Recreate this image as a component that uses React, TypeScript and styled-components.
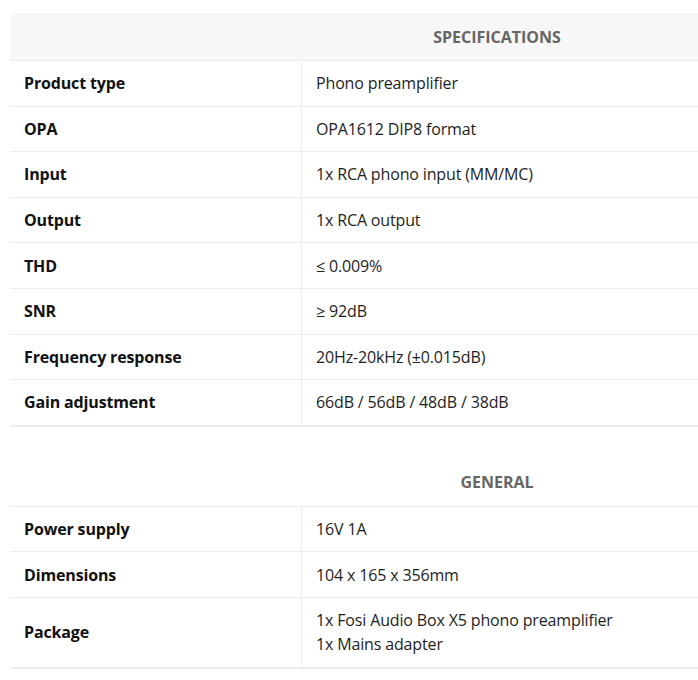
import React from "react";
import styled, { createGlobalStyle } from "styled-components";

const Global = createGlobalStyle`
  html, body { margin: 0; padding: 0; background: #ffffff; }
  body { font-family: "Open Sans", "Noto Sans", sans-serif; overflow: hidden; }
`;

const Page = styled.div`
  padding: 13px 0 0 10px;
  display: flex;
  flex-direction: column;
  gap: 32px;
`;

const Table = styled.div`
  display: grid;
  grid-template-columns: 292px 1fr;
  border-bottom: 1px solid #ececec;
  width: 700px;
`;

const HeadCell = styled.div<{ $shaded: boolean }>`
  background: ${(p) => (p.$shaded ? "#f7f7f7" : "#ffffff")};
  height: 47px;
  border-bottom: 1px solid #ececec;
  display: flex;
  align-items: center;
  justify-content: center;
  padding-right: 18px;
  font-size: 16px;
  font-weight: 700;
  color: #666666;
`;

const Cell = styled.div<{ $label?: boolean }>`
  padding: 10.3px 14px;
  line-height: 24px;
  font-size: 16px;
  letter-spacing: -0.15px;
  color: ${(p) => (p.$label ? "#111111" : "#1e1e1e")};
  font-weight: ${(p) => (p.$label ? 700 : 400)};
  border-bottom: 1px solid #ececec;
  border-right: ${(p) => (p.$label ? "1px solid #ececec" : "none")};
  display: flex;
  flex-direction: column;
  justify-content: center;
`;

type Row = { label: string; value: string[] };

const specs: Row[] = [
  { label: "Product type", value: ["Phono preamplifier"] },
  { label: "OPA", value: ["OPA1612 DIP8 format"] },
  { label: "Input", value: ["1x RCA phono input (MM/MC)"] },
  { label: "Output", value: ["1x RCA output"] },
  { label: "THD", value: ["≤ 0.009%"] },
  { label: "SNR", value: ["≥ 92dB"] },
  { label: "Frequency response", value: ["20Hz-20kHz (±0.015dB)"] },
  { label: "Gain adjustment", value: ["66dB / 56dB / 48dB / 38dB"] },
];

const general: Row[] = [
  { label: "Power supply", value: ["16V 1A"] },
  { label: "Dimensions", value: ["104 x 165 x 356mm"] },
  {
    label: "Package",
    value: ["1x Fosi Audio Box X5 phono preamplifier", "1x Mains adapter"],
  },
];

function SpecTable({ title, rows, shaded }: { title: string; rows: Row[]; shaded: boolean }) {
  return (
    <Table>
      <HeadCell $shaded={shaded} />
      <HeadCell $shaded={shaded}>{title}</HeadCell>
      {rows.map((r) => (
        <React.Fragment key={r.label}>
          <Cell $label>{r.label}</Cell>
          <Cell>
            {r.value.map((v) => (
              <span key={v}>{v}</span>
            ))}
          </Cell>
        </React.Fragment>
      ))}
    </Table>
  );
}

export default function App() {
  return (
    <>
      <Global />
      <Page>
        <SpecTable title="SPECIFICATIONS" rows={specs} shaded />
        <SpecTable title="GENERAL" rows={general} shaded={false} />
      </Page>
    </>
  );
}
